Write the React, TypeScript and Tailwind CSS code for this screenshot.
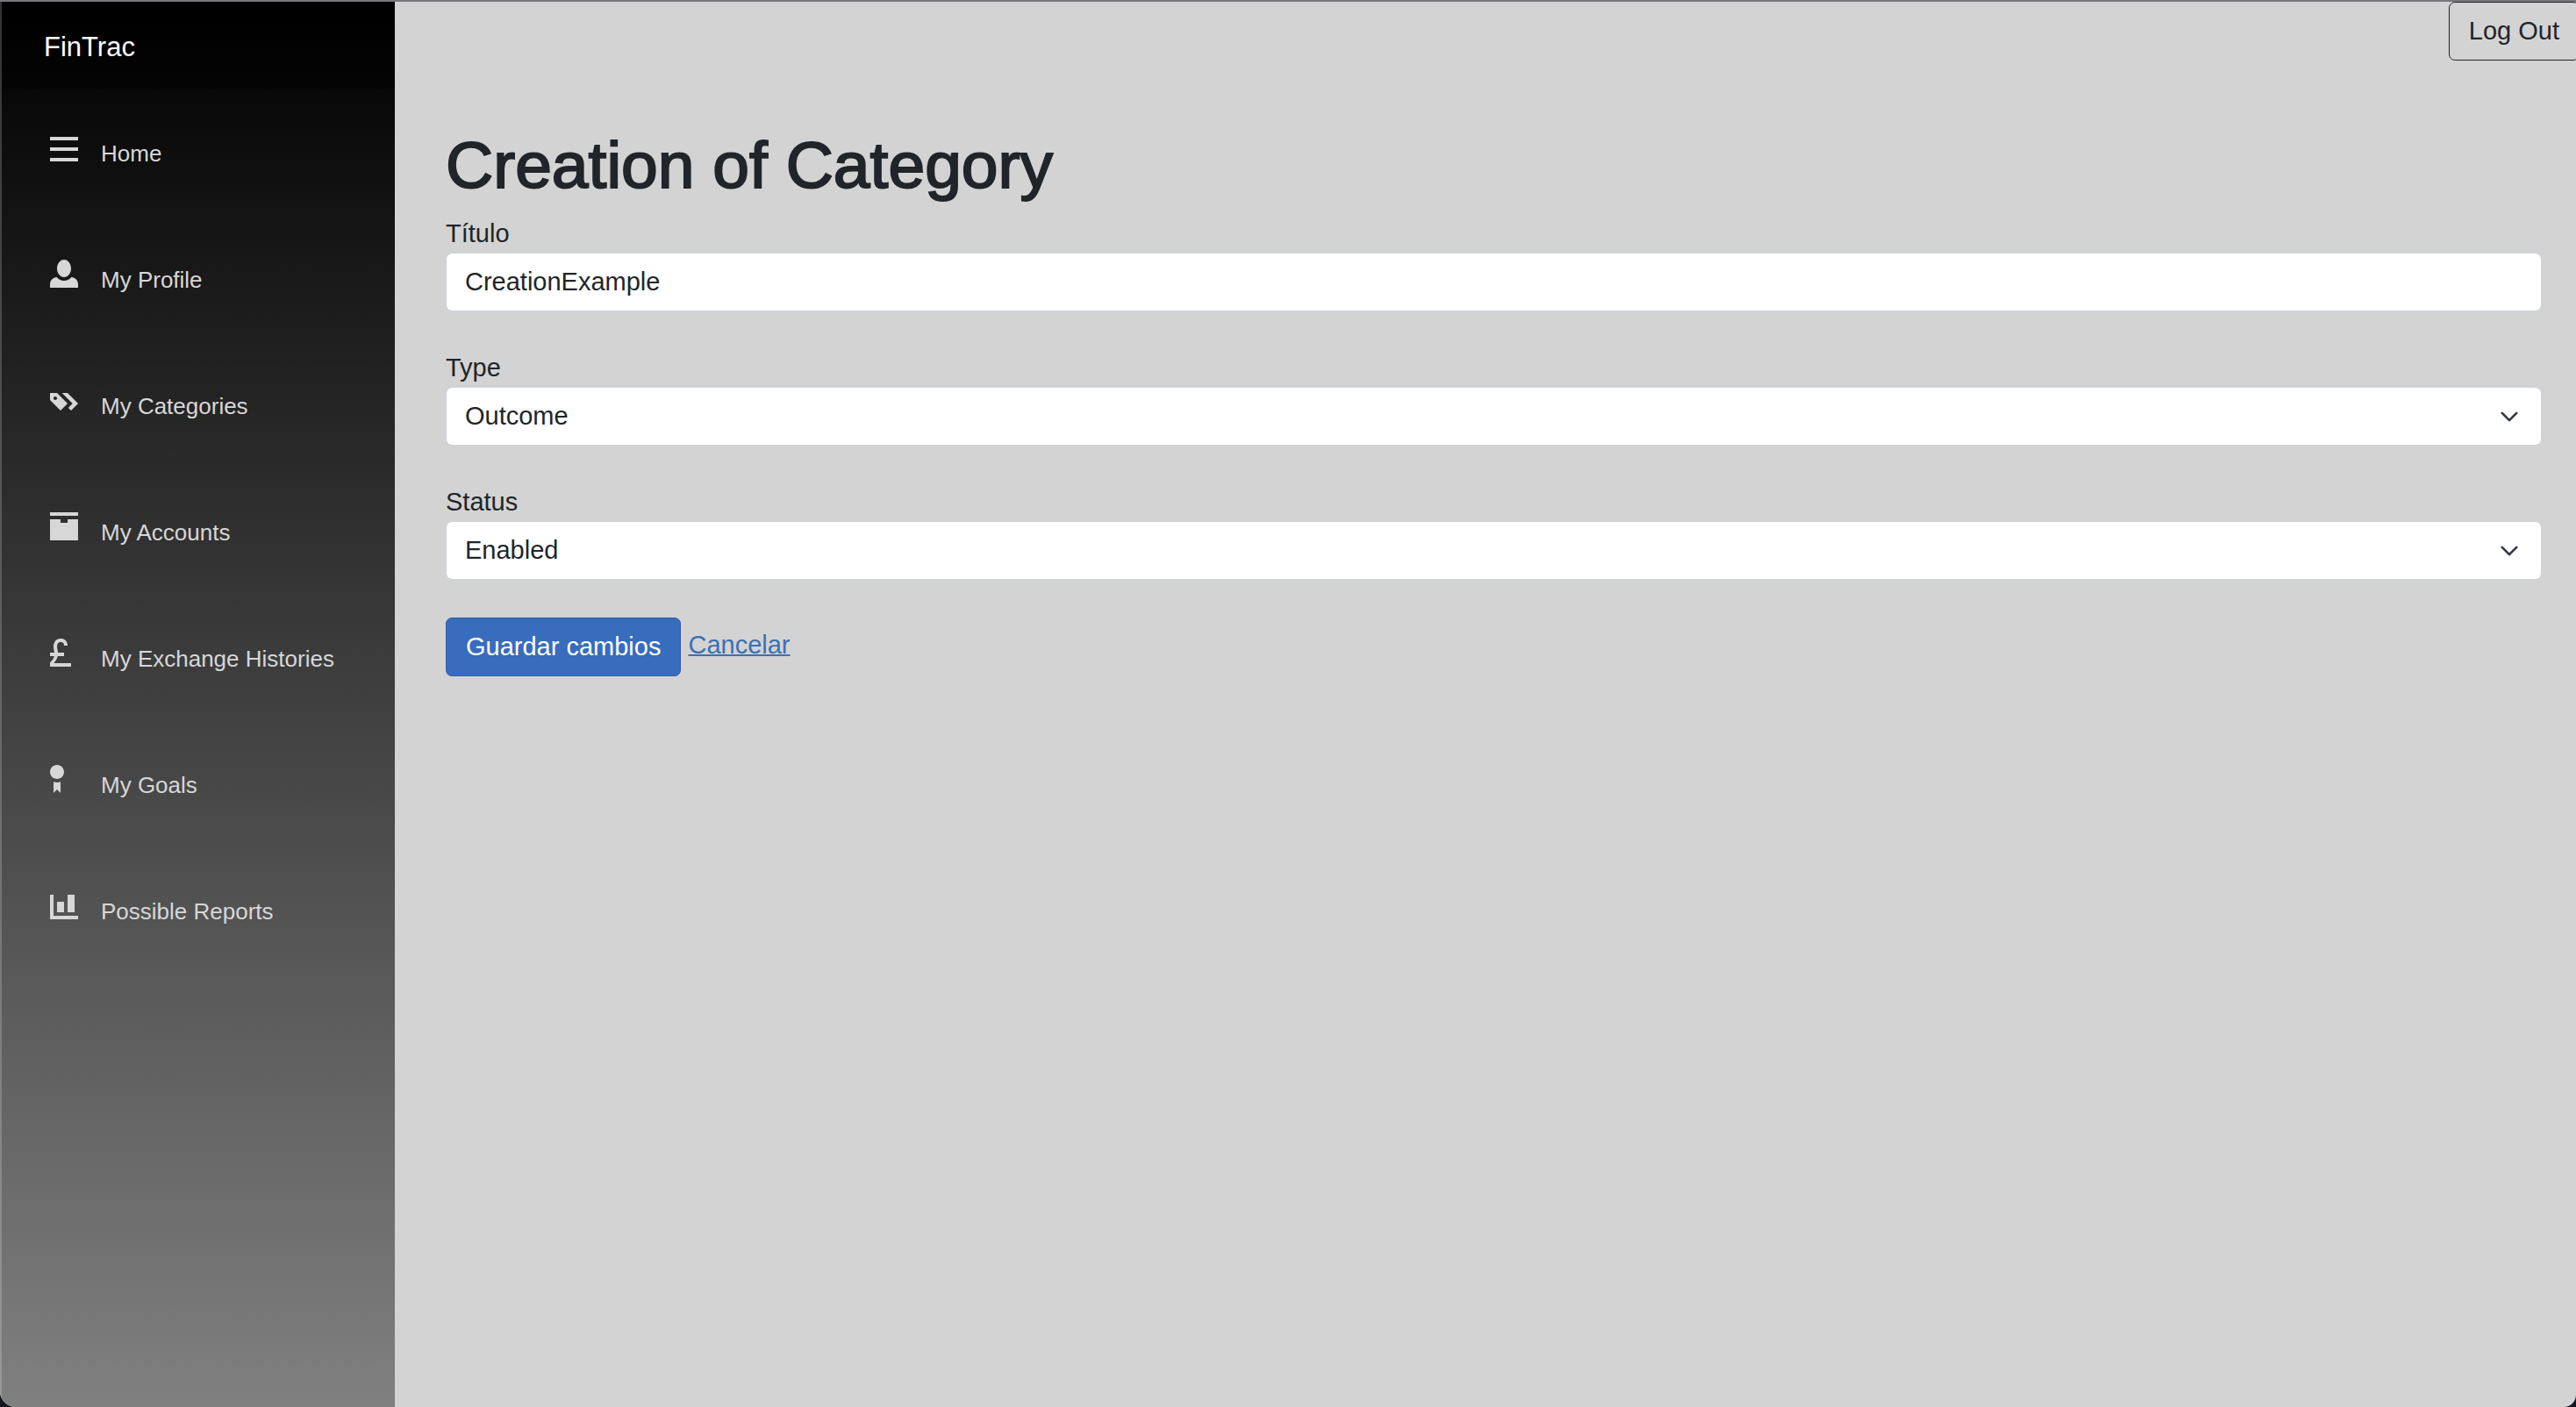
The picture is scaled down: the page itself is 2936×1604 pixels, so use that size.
import React from "react";

type NavEntry = { label: string; path: string };

const navEntries: NavEntry[] = [
  { label: "Home", path: "M0 1v1h8v-1h-8zm0 3v1h8v-1h-8zm0 3v1h8v-1h-8z" },
  {
    label: "My Profile",
    path: "M4 0c-1.1 0-2 1.12-2 2.5s.9 2.5 2 2.5 2-1.12 2-2.5-.9-2.5-2-2.5zm-2.09 5c-1.06.05-1.91.92-1.91 2v1h8v-1c0-1.08-.84-1.95-1.91-2-.54.61-1.28 1-2.09 1-.81 0-1.55-.39-2.09-1z",
  },
  {
    label: "My Categories",
    path: "M0 2v2l3 3 1.5-1.5.5-.5-2-2-1-1h-2zm3.41 0l3 3-1.19 1.22.78.78 2-2-3-3h-1.59zm-1.91 1c.28 0 .5.22.5.5s-.22.5-.5.5-.5-.22-.5-.5.22-.5.5-.5z",
  },
  {
    label: "My Accounts",
    path: "M0 0v1h8v-1h-8zm0 2v5.91c0 .05.04.09.09.09h7.81c.05 0 .09-.04.09-.09v-5.91h-2.97v1.03h-2.03v-1.03h-3z",
  },
  {
    label: "My Exchange Histories",
    path: "M3 0c-.62 0-1.16.26-1.5.69-.34.43-.5.99-.5 1.56 0 .69.16 1.25.25 1.75h-1.25v1h1.22c-.11.45-.37.96-1.06 1.66l-.16.13v1.22h6v-1h-4.91c.64-.73.98-1.4 1.13-2h1.78v-1h-1.72c-.08-.68-.28-1.24-.28-1.75 0-.39.11-.73.28-.94.17-.21.37-.31.72-.31.39 0 .61.11.75.25s.25.36.25.75h1c0-.58-.17-1.1-.53-1.47-.36-.37-.89-.53-1.47-.53z",
  },
  {
    label: "My Goals",
    path: "M2 0c-1.1 0-2 .9-2 2s.9 2 2 2 2-.9 2-2-.9-2-2-2zm-1 4.81v3.19l1-1 1 1v-3.19c-.31.11-.65.19-1 .19s-.69-.08-1-.19z",
  },
  {
    label: "Possible Reports",
    path: "M0 1v7h8v-1h-7v-6h-1zm5 0v5h2v-5h-2zm-3 2v3h2v-3h-2z",
  },
];

const controlClass =
  "block w-full appearance-none rounded-[7px] border border-[#ced4da] bg-white bg-clip-padding px-[21px] py-[11px] leading-[43px] text-[#212529]";

function Sidebar() {
  return (
    <aside className="w-[450px] shrink-0 border-l-2 border-white/20 bg-linear-to-b/srgb from-black to-[#808080] text-[#d7d7d7]">
      <div className="flex h-[99px] items-center bg-black/40 pt-1 pl-12">
        <a href="#" className="text-[31px] leading-[43px] text-white">
          FinTrac
        </a>
      </div>
      <nav className="pt-[51px]">
        <ul>
          {navEntries.map(({ label, path }) => (
            <li key={label} className="h-36">
              <a href="#" className="flex items-start gap-[26px] pl-[55px] text-[26px]">
                <svg viewBox="0 0 8 8" className="size-8 shrink-0 fill-current" aria-hidden="true">
                  <path d={path} />
                </svg>
                <span className="mt-1 leading-[39px]">{label}</span>
              </a>
            </li>
          ))}
        </ul>
      </nav>
    </aside>
  );
}

function SelectField({ id, label, options }: { id: string; label: string; options: string[] }) {
  return (
    <div>
      <label htmlFor={id} className="block">
        {label}
      </label>
      <div className="relative">
        <select id={id} className={controlClass}>
          {options.map((option) => (
            <option key={option}>{option}</option>
          ))}
        </select>
        <svg
          viewBox="0 0 16 16"
          className="pointer-events-none absolute inset-y-0 right-[26px] my-auto size-[22px]"
          fill="none"
          stroke="#343a40"
          strokeWidth="2"
          strokeLinecap="round"
          strokeLinejoin="round"
          aria-hidden="true"
        >
          <path d="m2 5 6 6 6-6" />
        </svg>
      </div>
    </div>
  );
}

export default function App() {
  return (
    <div className="bg-[#14161c] font-['Liberation_Sans',Arial,sans-serif]">
      <div className="flex min-h-screen overflow-hidden rounded-br-[14px] rounded-bl-[18px] border-t-2 border-[#77777c] bg-[#d3d3d3] text-[29px] leading-[43px] text-[#212529]">
        <Sidebar />
        <main className="min-w-0 flex-1">
          <div className="flex justify-end">
            <button
              type="button"
              className="-mr-1 rounded-[7px] border border-[#212529] px-[22px] py-[11px] leading-[43px]"
            >
              Log Out
            </button>
          </div>
          <section className="pt-[76px] pr-[39px] pl-[58px]">
            <h1 className="mb-[14px] text-[75px] leading-[86px] [-webkit-text-stroke:2px_#212529]">
              Creation of Category
            </h1>
            <form className="flex flex-col gap-[43px]" onSubmit={(e) => e.preventDefault()}>
              <div>
                <label htmlFor="title" className="block">
                  Título
                </label>
                <input id="title" type="text" defaultValue="CreationExample" className={controlClass} />
              </div>
              <SelectField id="type" label="Type" options={["Outcome", "Income"]} />
              <SelectField id="status" label="Status" options={["Enabled", "Disabled"]} />
              <div className="flex items-center gap-2">
                <button
                  type="submit"
                  className="rounded-[7px] border border-[#315fa5] bg-[#386cbd] px-[22px] py-[11px] leading-[43px] text-white"
                >
                  Guardar cambios
                </button>
                <a href="#" className="pb-1 text-[#3a70b4] underline decoration-2">
                  Cancelar
                </a>
              </div>
            </form>
          </section>
        </main>
      </div>
    </div>
  );
}
